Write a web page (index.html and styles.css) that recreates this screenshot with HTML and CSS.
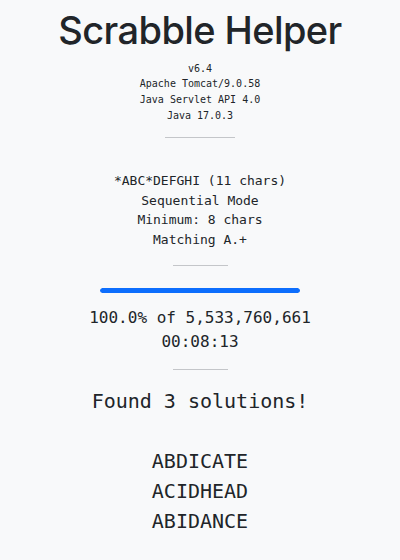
FILE: index.html
```html
<!DOCTYPE html>
<html>
<head>
<meta charset="utf-8">
<link rel="stylesheet" href="styles.css">
</head>
<body>
<main class="page">
  <h1 class="title">Scrabble Helper</h1>
  <div class="info">
    <div>v6.4</div>
    <div>Apache Tomcat/9.0.58</div>
    <div>Java Servlet API 4.0</div>
    <div>Java 17.0.3</div>
  </div>
  <hr class="rule rule-wide">
  <div class="query">
    <div>*ABC*DEFGHI (11 chars)</div>
    <div>Sequential Mode</div>
    <div>Minimum: 8 chars</div>
    <div>Matching A.+</div>
  </div>
  <hr class="rule rule-before-bar">
  <div class="progress"><div class="progress-bar" style="width:100%"></div></div>
  <div class="stats">
    <div>100.0% of 5,533,760,661</div>
    <div>00:08:13</div>
  </div>
  <hr class="rule rule-after-stats">
  <div class="found">Found 3 solutions!</div>
  <div class="words">
    <div>ABDICATE</div>
    <div>ACIDHEAD</div>
    <div>ABIDANCE</div>
  </div>
</main>
</body>
</html>
```
FILE: styles.css
```css
html, body {
  margin: 0;
  padding: 0;
  background: #f8f9fa;
  color: #212529;
}
.page {
  display: flex;
  flex-direction: column;
  align-items: center;
  text-align: center;
  font-family: "DejaVu Sans Mono", monospace;
}
.title {
  font-family: Inter, "Noto Sans", sans-serif;
  font-weight: 500;
  font-size: 38px;
  line-height: 1.2;
  margin: 8px 0 7px;
  letter-spacing: -0.6px;
}
.info {
  font-size: 10px;
  line-height: 15.7px;
}
.rule {
  width: 55px;
  height: 0;
  border: 0;
  border-top: 1px solid #c4c6c9;
  margin: 16px 0;
}
.rule-wide {
  width: 70px;
  margin: 14px 0 33px;
}
.rule-before-bar {
  margin-bottom: 12px;
}
.rule-after-stats {
  margin-top: 15px;
}
.query {
  font-size: 13px;
  line-height: 19.5px;
}
.progress {
  width: 200px;
  height: 5px;
  margin: 10px 0 13px;
  border-radius: 3px;
  background: #e9ecef;
  overflow: hidden;
}
.progress-bar {
  height: 100%;
  background: #0d6efd;
  border-radius: 3px;
}
.stats {
  font-size: 16px;
  line-height: 24px;
}
.found {
  font-size: 20px;
  line-height: 30px;
}
.words {
  margin-top: 30px;
  font-size: 20px;
  line-height: 30px;
}
```
